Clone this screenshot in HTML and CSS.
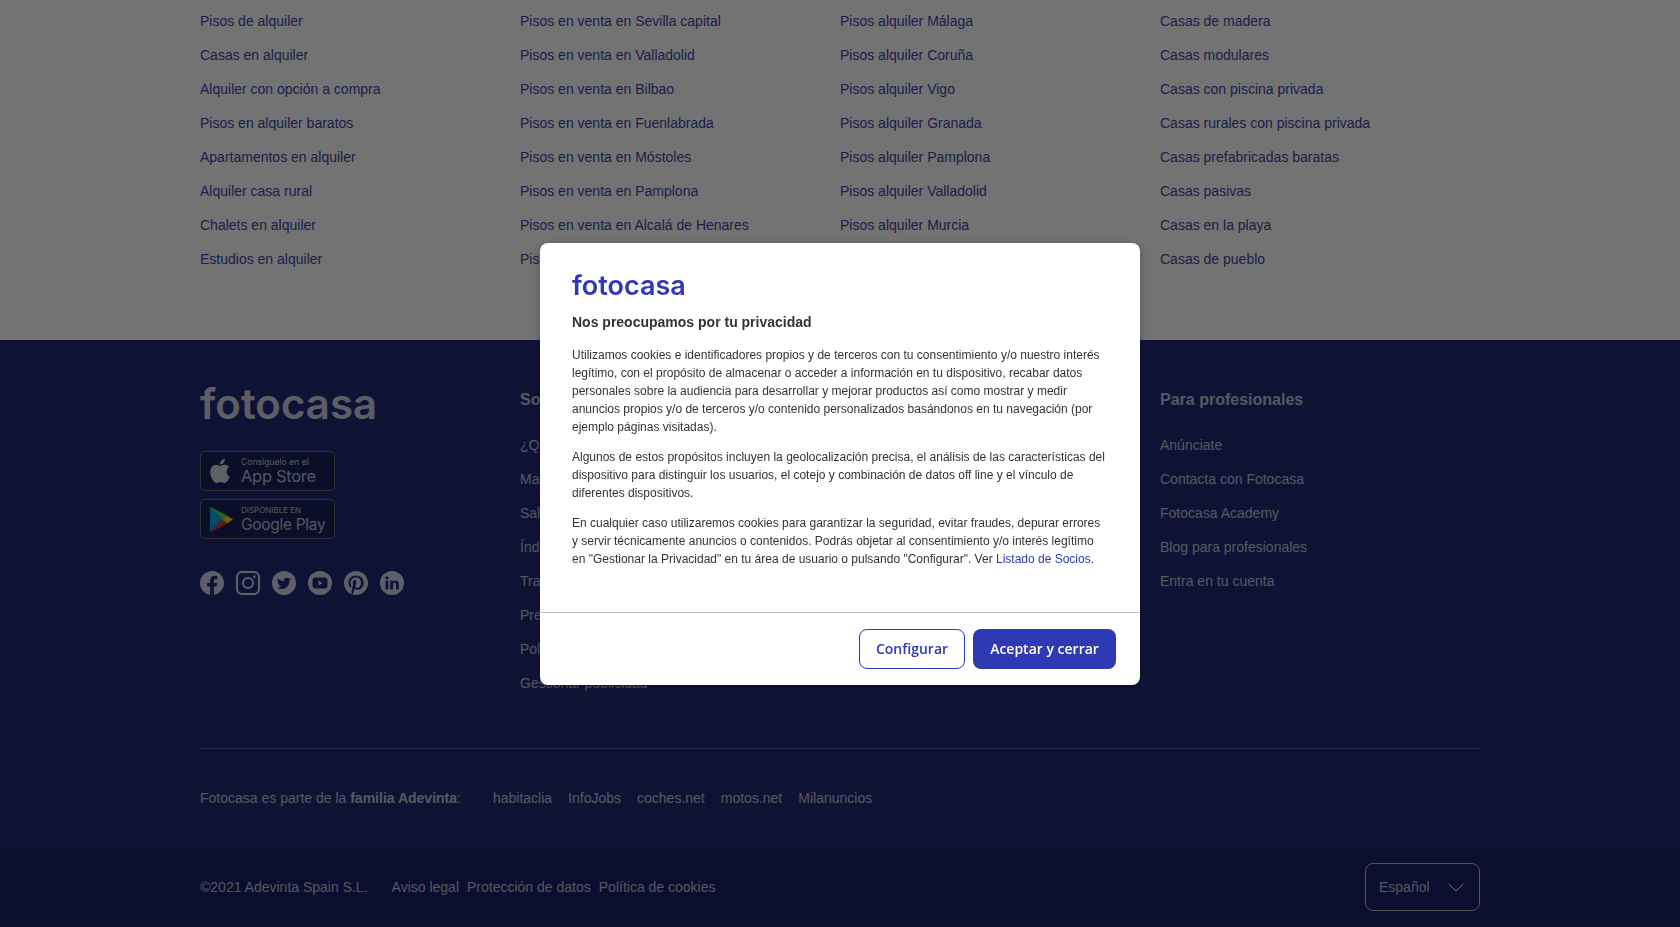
FILE: index.html
```html
<!DOCTYPE html>
<html lang="es">
<head>
<meta charset="UTF-8" />
<meta name="viewport" content="width=device-width, initial-scale=1" />
<title>Fotocasa</title>
<link rel="stylesheet" href="styles.css">
</head>
<body>

<section class="seo-links">
  <div class="wrap grid">
    <ul class="link-list">
      <li><a href="#">Pisos de alquiler</a></li>
      <li><a href="#">Casas en alquiler</a></li>
      <li><a href="#">Alquiler con opción a compra</a></li>
      <li><a href="#">Pisos en alquiler baratos</a></li>
      <li><a href="#">Apartamentos en alquiler</a></li>
      <li><a href="#">Alquiler casa rural</a></li>
      <li><a href="#">Chalets en alquiler</a></li>
      <li><a href="#">Estudios en alquiler</a></li>
    </ul>
    <ul class="link-list">
      <li><a href="#">Pisos en venta en Sevilla capital</a></li>
      <li><a href="#">Pisos en venta en Valladolid</a></li>
      <li><a href="#">Pisos en venta en Bilbao</a></li>
      <li><a href="#">Pisos en venta en Fuenlabrada</a></li>
      <li><a href="#">Pisos en venta en Móstoles</a></li>
      <li><a href="#">Pisos en venta en Pamplona</a></li>
      <li><a href="#">Pisos en venta en Alcalá de Henares</a></li>
      <li><a href="#">Pisos en venta en Leganés</a></li>
    </ul>
    <ul class="link-list">
      <li><a href="#">Pisos alquiler Málaga</a></li>
      <li><a href="#">Pisos alquiler Coruña</a></li>
      <li><a href="#">Pisos alquiler Vigo</a></li>
      <li><a href="#">Pisos alquiler Granada</a></li>
      <li><a href="#">Pisos alquiler Pamplona</a></li>
      <li><a href="#">Pisos alquiler Valladolid</a></li>
      <li><a href="#">Pisos alquiler Murcia</a></li>
      <li><a href="#">Pisos alquiler Gijón</a></li>
    </ul>
    <ul class="link-list">
      <li><a href="#">Casas de madera</a></li>
      <li><a href="#">Casas modulares</a></li>
      <li><a href="#">Casas con piscina privada</a></li>
      <li><a href="#">Casas rurales con piscina privada</a></li>
      <li><a href="#">Casas prefabricadas baratas</a></li>
      <li><a href="#">Casas pasivas</a></li>
      <li><a href="#">Casas en la playa</a></li>
      <li><a href="#">Casas de pueblo</a></li>
    </ul>
  </div>
</section>

<footer class="site-footer">
  <div class="wrap">
    <div class="grid footer-main">
      <div class="brand-col">
        <div class="brand-logo">fotocasa</div>

        <a class="store-badge" href="#">
          <svg class="badge-icon apple" viewBox="0 0 24 24"><path fill="#fff" d="M12.152 6.896c-.948 0-2.415-1.078-3.96-1.04-2.04.027-3.91 1.183-4.961 3.014-2.117 3.675-.546 9.103 1.519 12.09 1.013 1.454 2.208 3.09 3.792 3.039 1.52-.065 2.09-.987 3.935-.987 1.831 0 2.35.987 3.96.948 1.637-.026 2.676-1.48 3.676-2.948 1.156-1.688 1.636-3.325 1.662-3.415-.039-.013-3.182-1.221-3.22-4.857-.026-3.04 2.48-4.494 2.597-4.559-1.429-2.09-3.623-2.324-4.39-2.376-2-.156-3.675 1.09-4.61 1.09zM15.53 3.83c.843-1.012 1.4-2.427 1.245-3.83-1.207.052-2.662.805-3.532 1.818-.78.896-1.454 2.338-1.273 3.714 1.338.104 2.715-.688 3.559-1.701"/></svg>
          <span class="badge-text">
            <span class="badge-small">Consíguelo en el</span>
            <span class="badge-big">App Store</span>
          </span>
        </a>
        <a class="store-badge" href="#">
          <svg class="badge-icon play" viewBox="0 0 23 25">
            <polygon fill="#00a8e8" points="0,0 12,12.5 0,25"/>
            <polygon fill="#3ddc6e" points="0,0 1,0 17,8.5 12,12.5"/>
            <polygon fill="#ffc928" points="17,8.5 23,12.5 17,16.5 12,12.5"/>
            <polygon fill="#e8323c" points="12,12.5 17,16.5 1,25 0,25"/>
          </svg>
          <span class="badge-text">
            <span class="badge-small caps">DISPONIBLE EN</span>
            <span class="badge-big play-name">Google Play</span>
          </span>
        </a>

        <div class="social">
          <a href="#" aria-label="Facebook"><svg viewBox="0 0 24 24"><path fill="#fff" d="M24 12.073c0-6.627-5.373-12-12-12s-12 5.373-12 12c0 5.99 4.388 10.954 10.125 11.854v-8.385H7.078v-3.47h3.047V9.43c0-3.007 1.792-4.669 4.533-4.669 1.312 0 2.686.235 2.686.235v2.953H15.83c-1.491 0-1.956.925-1.956 1.874v2.25h3.328l-.532 3.47h-2.796v8.385C19.612 23.027 24 18.062 24 12.073z"/></svg></a>
          <a href="#" aria-label="Instagram"><svg viewBox="0 0 24 24" fill="none" stroke="#fff" stroke-width="2"><rect x="1" y="1" width="22" height="22" rx="5"/><circle cx="12" cy="12" r="5"/><circle cx="18.4" cy="5.6" r="1.3" fill="#fff" stroke="none"/></svg></a>
          <a href="#" aria-label="Twitter"><svg viewBox="0 0 24 24"><circle cx="12" cy="12" r="12" fill="#fff"/><path class="cut" transform="translate(5 5.4) scale(.58)" d="M23.953 4.57a10 10 0 01-2.825.775 4.958 4.958 0 002.163-2.723c-.951.555-2.005.959-3.127 1.184a4.92 4.92 0 00-8.384 4.482C7.69 8.095 4.067 6.13 1.64 3.162a4.822 4.822 0 00-.666 2.475c0 1.71.87 3.213 2.188 4.096a4.904 4.904 0 01-2.228-.616v.06a4.923 4.923 0 003.946 4.827 4.996 4.996 0 01-2.212.085 4.936 4.936 0 004.604 3.417 9.867 9.867 0 01-6.102 2.105c-.39 0-.779-.023-1.17-.067a13.995 13.995 0 007.557 2.209c9.053 0 13.998-7.496 13.998-13.985 0-.21 0-.42-.015-.63A9.935 9.935 0 0024 4.59z"/></svg></a>
          <a href="#" aria-label="YouTube"><svg viewBox="0 0 24 24"><circle cx="12" cy="12" r="12" fill="#fff"/><rect class="cut" x="4.5" y="6.5" width="15" height="11" rx="3"/><polygon fill="#fff" points="10.4,9.6 14.6,12 10.4,14.4"/></svg></a>
          <a href="#" aria-label="Pinterest"><svg viewBox="0 0 24 24"><path fill="#fff" d="M12.017 0C5.396 0 .029 5.367.029 11.987c0 5.079 3.158 9.417 7.618 11.162-.105-.949-.199-2.403.041-3.439.219-.937 1.406-5.957 1.406-5.957s-.359-.72-.359-1.781c0-1.663.967-2.911 2.168-2.911 1.024 0 1.518.769 1.518 1.688 0 1.029-.653 2.567-.992 3.992-.285 1.193.6 2.165 1.775 2.165 2.128 0 3.768-2.245 3.768-5.487 0-2.861-2.063-4.869-5.008-4.869-3.41 0-5.409 2.562-5.409 5.199 0 1.033.394 2.143.889 2.741.099.12.112.225.085.345-.09.375-.293 1.199-.334 1.363-.053.225-.172.271-.401.165-1.495-.69-2.433-2.878-2.433-4.646 0-3.776 2.748-7.252 7.92-7.252 4.158 0 7.392 2.967 7.392 6.923 0 4.135-2.607 7.462-6.233 7.462-1.214 0-2.354-.629-2.758-1.379l-.749 2.848c-.269 1.045-1.004 2.352-1.498 3.146 1.123.345 2.306.535 3.55.535 6.607 0 11.985-5.365 11.985-11.987C23.97 5.39 18.592.026 11.985.026L12.017 0z"/></svg></a>
          <a href="#" aria-label="LinkedIn"><svg viewBox="0 0 24 24"><circle cx="12" cy="12" r="12" fill="#fff"/><rect class="cut" x="5.6" y="9.6" width="2.8" height="8.8"/><circle class="cut" cx="7" cy="6.9" r="1.6"/><path class="cut" d="M10.2 9.6h2.7v1.2c.5-.8 1.5-1.4 2.7-1.4 2.5 0 3.2 1.6 3.2 4v5h-2.8v-4.5c0-1.2-.3-2.1-1.4-2.1-1.2 0-1.6.9-1.6 2.1v4.5h-2.8z"/></svg></a>
        </div>
      </div>

      <div>
        <h4>Sobre nosotros</h4>
        <ul class="link-list">
          <li><a href="#">¿Quiénes somos?</a></li>
          <li><a href="#">Mapa web</a></li>
          <li><a href="#">Sala de prensa</a></li>
          <li><a href="#">Índice inmobiliario</a></li>
          <li><a href="#">Trabaja con nosotros</a></li>
          <li><a href="#">Preguntas frecuentes</a></li>
          <li><a href="#">Política de privacidad</a></li>
          <li><a href="#">Gestionar publicidad</a></li>
        </ul>
      </div>

      <div>
        <h4>Para particulares</h4>
        <ul class="link-list">
          <li><a href="#">Publica tu anuncio</a></li>
          <li><a href="#">Calculadora de hipotecas</a></li>
          <li><a href="#">Blog</a></li>
        </ul>
      </div>

      <div>
        <h4>Para profesionales</h4>
        <ul class="link-list">
          <li><a href="#">Anúnciate</a></li>
          <li><a href="#">Contacta con Fotocasa</a></li>
          <li><a href="#">Fotocasa Academy</a></li>
          <li><a href="#">Blog para profesionales</a></li>
          <li><a href="#">Entra en tu cuenta</a></li>
        </ul>
      </div>
    </div>

    <div class="family">
      <span class="family-label">Fotocasa es parte de la <strong>familia Adevinta</strong>:</span>
      <a href="#">habitaclia</a>
      <a href="#">InfoJobs</a>
      <a href="#">coches.net</a>
      <a href="#">motos.net</a>
      <a href="#">Milanuncios</a>
    </div>
  </div>

  <div class="legal-bar">
    <div class="wrap legal-row">
      <span class="copyright">©2021 Adevinta Spain S.L.</span>
      <a href="#">Aviso legal</a>
      <a href="#">Protección de datos</a>
      <a href="#">Política de cookies</a>
      <div class="lang-select">
        Español
        <svg viewBox="0 0 16 9" fill="none" stroke="#fff" stroke-width="1"><path d="M.5.5 8 8l7.5-7.5"/></svg>
      </div>
    </div>
  </div>
</footer>

<!-- Cookie consent -->
<div class="overlay">
  <div class="consent" role="dialog" aria-modal="true" aria-labelledby="consentTitle">
    <div class="consent-body">
      <div class="consent-logo">fotocasa</div>
      <h2 id="consentTitle">Nos preocupamos por tu privacidad</h2>
      <p>Utilizamos cookies e identificadores propios y de terceros con tu consentimiento y/o nuestro interés legítimo, con el propósito de almacenar o acceder a información en tu dispositivo, recabar datos personales sobre la audiencia para desarrollar y mejorar productos así como mostrar y medir anuncios propios y/o de terceros y/o contenido personalizados basándonos en tu navegación (por ejemplo páginas visitadas).</p>
      <p>Algunos de estos propósitos incluyen la geolocalización precisa, el análisis de las características del dispositivo para distinguir los usuarios, el cotejo y combinación de datos off line y el vínculo de diferentes dispositivos.</p>
      <p>En cualquier caso utilizaremos cookies para garantizar la seguridad, evitar fraudes, depurar errores y servir técnicamente anuncios o contenidos. Podrás objetar al consentimiento y/o interés legítimo en "Gestionar la Privacidad" en tu área de usuario o pulsando "Configurar". Ver <a href="#">Listado de Socios.</a></p>
    </div>
    <div class="consent-actions">
      <button class="btn btn-outline">Configurar</button>
      <button class="btn btn-solid">Aceptar y cerrar</button>
    </div>
  </div>
</div>

</body>
</html>
```

FILE: styles.css
```css
* {
  box-sizing: border-box;
}
html, body {
  height: 927px;
  overflow: hidden;
}
body {
  margin: 0;
  font-family: "Liberation Sans", Arial, sans-serif;
  font-size: 14px;
  color: #333;
  background: #fff;
}
a {
  color: inherit;
  text-decoration: none;
}
ul {
  list-style: none;
  margin: 0;
  padding: 0;
}

.wrap {
  width: 1280px;
  margin: 0 auto;
}
.grid {
  display: grid;
  grid-template-columns: repeat(4, 320px);
}
.link-list li {
  height: 34px;
  line-height: 34px;
  white-space: nowrap;
}

/* Links above the footer */
.seo-links {
  height: 340px;
  padding-top: 4px;
  color: #3d45a8;
}

/* Footer */
.site-footer {
  background: #212c78;
  color: rgba(255,255,255,0.72);
}
.footer-main {
  padding: 48px 0;
  border-bottom: 1px solid rgba(255,255,255,0.22);
  height: 409px;
}
.footer-main h4 {
  margin: 0 0 16px;
  font-size: 16px;
  line-height: 24px;
  font-weight: bold;
}
.brand-logo {
  font-family: Inter, sans-serif;
  font-weight: 600;
  font-size: 42px;
  line-height: 31px;
  height: 31px;
  margin-bottom: 32px;
  color: rgba(255,255,255,0.8);
}
.store-badge {
  display: flex;
  align-items: center;
  width: 135px;
  height: 40px;
  margin-bottom: 8px;
  background: rgba(0,0,0,0.25);
  border: 1px solid #6e6e6e;
  border-radius: 5px;
}
.badge-icon.apple {
  width: 24px;
  height: 24px;
  margin-left: 7px;
  opacity: 0.8;
}
.badge-icon.play {
  width: 23px;
  height: 25px;
  margin-left: 9px;
  margin-right: -1px;
}
.badge-text {
  display: flex;
  flex-direction: column;
  margin-left: 9px;
  white-space: nowrap;
}
.badge-small {
  font-family: Inter, sans-serif;
  font-size: 8.6px;
  line-height: 10px;
}
.badge-small.caps {
  font-size: 8px;
}
.badge-big {
  font-family: Inter, sans-serif;
  font-size: 16.5px;
  line-height: 19px;
  letter-spacing: -0.3px;
}
.badge-big.play-name {
  font-size: 15.5px;
}
.social {
  display: flex;
  gap: 12px;
  margin-top: 32px;
  opacity: 0.8;
}
.social a, .social svg {
  display: block;
  width: 24px;
  height: 24px;
}
.cut {
  fill: #212c78;
}

.family {
  display: flex;
  align-items: center;
  gap: 16px;
  height: 98px;
}
.family-label {
  margin-right: 16px;
}

.legal-bar {
  background: #1a2166;
  height: 80px;
}
.legal-row {
  display: flex;
  align-items: center;
  gap: 8px;
  height: 80px;
}
.copyright {
  margin-right: 16px;
}
.lang-select {
  display: flex;
  align-items: center;
  justify-content: space-between;
  width: 115px;
  height: 48px;
  margin-left: auto;
  padding: 0 15px 0 13px;
  border: 1px solid #bbb;
  border-radius: 8px;
}
.lang-select svg {
  width: 16px;
  height: 9px;
}

/* Cookie consent */
.overlay {
  position: fixed;
  top: 0;
  left: 0;
  width: 100%;
  height: 100%;
  background: rgba(0,0,0,0.55);
  display: flex;
  justify-content: center;
  align-items: center;
}
.consent {
  width: 600px;
  height: 442px;
  background: #fff;
  border-radius: 8px;
  box-shadow: 0 2px 10px rgba(0,0,0,0.3);
  display: flex;
  flex-direction: column;
}
.consent-body {
  flex: 1;
  padding: 30px 32px 0;
  border-bottom: 1px solid #bdbdbd;
}
.consent-logo {
  font-family: Inter, sans-serif;
  font-weight: 600;
  font-size: 27px;
  line-height: 26px;
  height: 26px;
  color: #2f39b3;
}
.consent h2 {
  margin: 13px 0 14px;
  font-size: 14px;
  line-height: 20px;
  font-weight: bold;
  color: #333;
}
.consent p {
  margin: 0 0 12px;
  font-size: 12px;
  line-height: 18px;
  color: #333;
}
.consent p a {
  color: #2f39b3;
}
.consent-actions {
  display: flex;
  justify-content: flex-end;
  gap: 8px;
  padding: 16px 24px;
}
.btn {
  height: 40px;
  border-radius: 8px;
  font-family: "Open Sans", sans-serif;
  font-size: 14px;
  font-weight: 600;
  cursor: pointer;
}
.btn-outline {
  width: 106px;
  background: #fff;
  color: #2f39b3;
  border: 1px solid #2f39b3;
}
.btn-solid {
  width: 143px;
  background: #2f39b3;
  color: #fff;
  border: none;
}
```
